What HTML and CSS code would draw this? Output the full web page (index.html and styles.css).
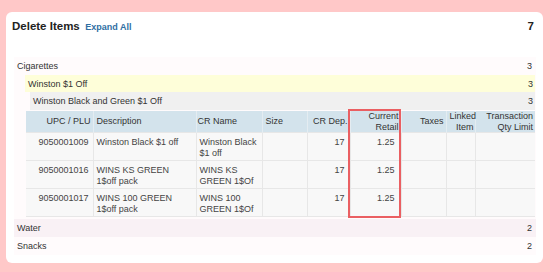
FILE: index.html
```html
<!DOCTYPE html>
<html lang="en">
<head>
    <meta charset="UTF-8">
    <title>Delete Items</title>
    <link rel="stylesheet" href="styles.css">
</head>
<body>
    <div class="panel">
        <div class="panel-head">
            <div><span class="title">Delete Items</span> <a class="expand" href="#">Expand All</a></div>
            <span class="total">7</span>
        </div>

        <div class="groups">
            <div class="group">
                <div class="row row-dept"><span>Cigarettes</span><span>3</span></div>
                <div class="promo">
                    <div class="row row-promo"><span>Winston $1 Off</span><span>3</span></div>
                    <div class="row row-sub"><span>Winston Black and Green $1 Off</span><span>3</span></div>
                    <div class="table-wrap">
                        <table class="items">
                            <colgroup>
                                <col class="c-upc">
                                <col class="c-desc">
                                <col class="c-name">
                                <col class="c-size">
                                <col class="c-dep">
                                <col class="c-retail">
                                <col class="c-tax">
                                <col class="c-link">
                                <col class="c-qty">
                            </colgroup>
                            <thead>
                                <tr>
                                    <th class="num">UPC / PLU</th>
                                    <th>Description</th>
                                    <th class="name">CR Name</th>
                                    <th>Size</th>
                                    <th class="num">CR Dep.</th>
                                    <th class="num">Current<br>Retail</th>
                                    <th class="num">Taxes</th>
                                    <th class="num tight">Linked<br>Item</th>
                                    <th class="num">Transaction<br>Qty Limit</th>
                                </tr>
                            </thead>
                            <tbody>
                                <tr>
                                    <td class="num">9050001009</td>
                                    <td>Winston Black $1 off</td>
                                    <td>Winston Black<br>$1 off</td>
                                    <td></td>
                                    <td class="num">17</td>
                                    <td class="num retail">1.25</td>
                                    <td></td>
                                    <td></td>
                                    <td></td>
                                </tr>
                                <tr>
                                    <td class="num">9050001016</td>
                                    <td>WINS KS GREEN<br>1$off pack</td>
                                    <td>WINS KS<br>GREEN 1$Of</td>
                                    <td></td>
                                    <td class="num">17</td>
                                    <td class="num retail">1.25</td>
                                    <td></td>
                                    <td></td>
                                    <td></td>
                                </tr>
                                <tr>
                                    <td class="num">9050001017</td>
                                    <td>WINS 100 GREEN<br>1$off pack</td>
                                    <td>WINS 100<br>GREEN 1$Of</td>
                                    <td></td>
                                    <td class="num">17</td>
                                    <td class="num retail">1.25</td>
                                    <td></td>
                                    <td></td>
                                    <td></td>
                                </tr>
                            </tbody>
                        </table>
                        <div class="highlight"></div>
                    </div>
                </div>
            </div>
            <div class="row row-dept alt"><span>Water</span><span>2</span></div>
            <div class="row row-dept"><span>Snacks</span><span>2</span></div>
        </div>
    </div>
</body>
</html>
```

FILE: styles.css
```css
body {
    margin: 0;
    background: #ffc8c8;
    font-family: "Liberation Sans", Arial, sans-serif;
    color: #333;
}
.panel {
    margin: 12px 7px 0 6px;
    background: #fff;
    border-radius: 6px;
    padding-bottom: 8px;
}
.panel-head {
    display: flex;
    justify-content: space-between;
    align-items: baseline;
    box-sizing: border-box;
    height: 45px;
    padding: 6px 9px 0 6px;
    line-height: 14px;
}
.title {
    font-size: 11.5px;
    font-weight: bold;
    color: #222;
}
.expand {
    font-size: 9px;
    font-weight: bold;
    color: #2f6fa3;
    text-decoration: none;
    margin-left: 1px;
}
.total {
    font-size: 11.5px;
    font-weight: bold;
    color: #222;
}
.groups {
    margin: 0 7px 0 8px;
    font-size: 9px;
}
.group {
    background: #fffbfc;
    padding-bottom: 2px;
}
.row {
    display: flex;
    justify-content: space-between;
    align-items: center;
    height: 18px;
    padding: 0 4px 0 3px;
}
.row-dept {
    background: #fffbfc;
}
.row-dept.alt {
    background: #f9f1f5;
}
.promo {
    margin: 0 1px 0 11px;
}
.row-promo {
    height: 17px;
    background: #fefed9;
    padding-right: 2px;
}
.row-sub {
    background: #f0f0f0;
    margin-left: 5px;
    padding-right: 2px;
}
.table-wrap {
    position: relative;
    margin: 1px 0 0 1px;
}
.items {
    width: 509px;
    border-collapse: collapse;
    table-layout: fixed;
    font-size: 9px;
    line-height: 10.5px;
}
.c-upc { width: 67px; }
.c-desc { width: 103px; }
.c-name { width: 66px; }
.c-size { width: 45px; }
.c-dep { width: 43px; }
.c-retail { width: 51px; }
.c-tax { width: 45px; }
.c-link { width: 29px; }
.c-qty { width: 60px; }
.items th {
    background: #d3e3ec;
    font-weight: normal;
    color: #333;
    height: 21px;
    padding: 0 2px 0 3px;
    text-align: left;
    vertical-align: middle;
    white-space: nowrap;
    border-left: 1px solid #e4ecf1;
}
.items th:first-child {
    border-left: none;
}
.items th.name {
    padding-left: 1px;
}
.items th.tight {
    padding-right: 1px;
}
.items td {
    background: #f8f8f8;
    color: #444;
    height: 28px;
    box-sizing: border-box;
    padding: 4px 1px 0 3px;
    vertical-align: top;
    white-space: nowrap;
    border: 1px solid #e7e7e7;
}
.items td:first-child {
    border-left: none;
}
.items td:last-child {
    border-right: none;
}
.items .num {
    text-align: right;
}
.items td.num {
    padding-right: 5px;
}
.items td:first-child.num {
    padding-right: 4px;
}
.items td.retail {
    padding-right: 6px;
}
.highlight {
    position: absolute;
    left: 322px;
    top: -2px;
    width: 49px;
    height: 105px;
    border: 2px solid #ea5f62;
}
```
